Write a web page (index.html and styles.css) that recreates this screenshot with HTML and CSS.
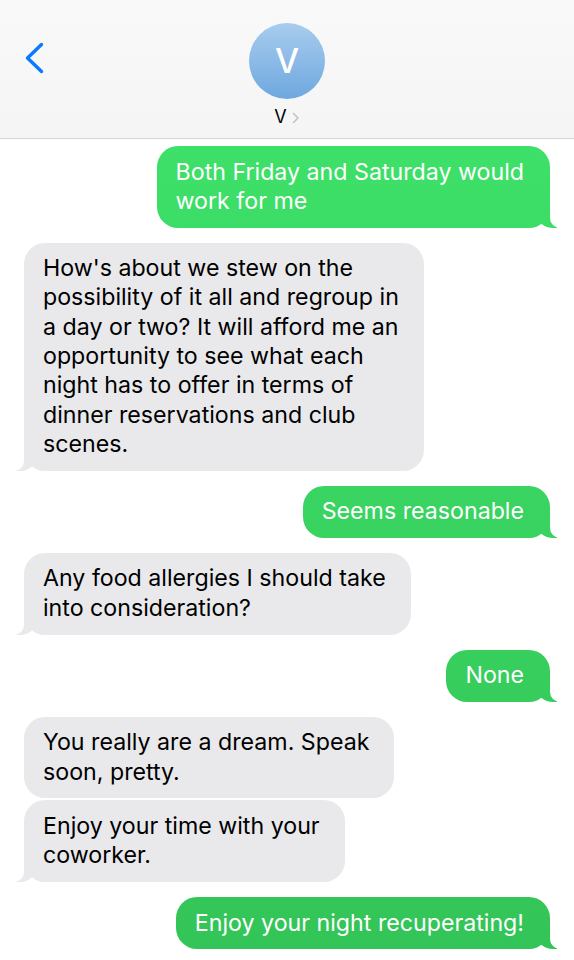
FILE: index.html
```html
<!DOCTYPE html>
<html lang="en">
<head>
<meta charset="UTF-8">
<meta name="viewport" content="width=device-width, initial-scale=1.0">
<title>V</title>
<link rel="stylesheet" href="styles.css">
</head>
<body>
<header class="thread-header">
  <button type="button" class="back-button" aria-label="Back">
    <svg width="24" height="36" viewBox="0 0 24 36">
      <path d="M19.5 4.5 L5.5 18 L19.5 31.5" fill="none" stroke="#0a7aff" stroke-width="3.4" stroke-linecap="round" stroke-linejoin="round"/>
    </svg>
  </button>
  <div class="contact">
    <div class="avatar">V</div>
    <div class="contact-name">
      V
      <svg class="contact-arrow" width="8" height="12" viewBox="0 0 8 12">
        <path d="M1.5 1.5 L6 6 L1.5 10.5" fill="none" stroke="#c3c3c7" stroke-width="1.6" stroke-linecap="round" stroke-linejoin="round"/>
      </svg>
    </div>
  </div>
  <div></div>
</header>

<main class="messages">
  <div class="bubble sent">Both Friday and Saturday would<br>work for me</div>

  <div class="bubble received">How's about we stew on the<br>possibility of it all and regroup in<br>a day or two? It will afford me an<br>opportunity to see what each<br>night has to offer in terms of<br>dinner reservations and club<br>scenes.</div>

  <div class="bubble sent">Seems reasonable</div>

  <div class="bubble received">Any food allergies I should take<br>into consideration?</div>

  <div class="bubble sent">None</div>

  <div class="group">
    <div class="bubble received no-tail">You really are a dream. Speak<br>soon, pretty.</div>
    <div class="bubble received">Enjoy your time with your<br>coworker.</div>
  </div>

  <div class="bubble sent">Enjoy your night recuperating!</div>
</main>
</body>
</html>
```

FILE: styles.css
```css
body {
  margin: 0;
  background: #fff;
  font-family: Inter, "Noto Sans", sans-serif;
  color: #000;
}

.thread-header {
  display: grid;
  grid-template-columns: 1fr auto 1fr;
  height: 138px;
  background: linear-gradient(#f9f9f9, #f5f5f5);
  border-bottom: 1px solid #d4d4d6;
}

.back-button {
  justify-self: start;
  align-self: start;
  margin: 40px 0 0 22px;
  padding: 0;
  border: none;
  background: none;
  line-height: 0;
}

.contact {
  display: flex;
  flex-direction: column;
  align-items: center;
}

.avatar {
  width: 76px;
  height: 76px;
  margin-top: 23px;
  border-radius: 50%;
  background: linear-gradient(#a8ccee, #6ea8df);
  color: #fff;
  font-size: 34px;
  font-weight: 500;
  line-height: 76px;
  text-align: center;
}

.contact-name {
  display: flex;
  align-items: center;
  gap: 5px;
  margin-top: 7px;
  font-size: 18px;
  line-height: 22px;
}

.contact-arrow {
  margin-top: 1px;
}

.messages {
  display: flex;
  flex-direction: column;
  gap: 15px;
  padding: 7px 24px 20px 24px;
}

.group {
  display: flex;
  flex-direction: column;
  align-items: flex-start;
  gap: 2px;
}

.bubble {
  position: relative;
  padding: 11.5px 25px 11.5px 19px;
  border-radius: 21px;
  font-size: 23.2px;
  line-height: 29.3px;
  white-space: nowrap;
}

.sent {
  align-self: flex-end;
  padding-right: 26px;
  color: #fff;
  background: linear-gradient(#3fe56b, #33c457) fixed;
}

.received {
  align-self: flex-start;
  background: #e9e9eb;
}

/* bubble tails */
.bubble::before,
.bubble::after {
  content: "";
  position: absolute;
  bottom: 0;
  height: 25px;
}

.sent::before {
  right: -7px;
  width: 20px;
  background: linear-gradient(#3fe56b, #33c457) fixed;
  border-bottom-left-radius: 16px 14px;
}

.sent::after {
  right: -26px;
  width: 26px;
  background: #fff;
  border-bottom-left-radius: 10px;
}

.received::before {
  left: -8px;
  width: 20px;
  background: #e9e9eb;
  border-bottom-right-radius: 16px 14px;
}

.received::after {
  left: -26px;
  width: 26px;
  background: #fff;
  border-bottom-right-radius: 10px;
}

.no-tail::before,
.no-tail::after {
  display: none;
}
```
